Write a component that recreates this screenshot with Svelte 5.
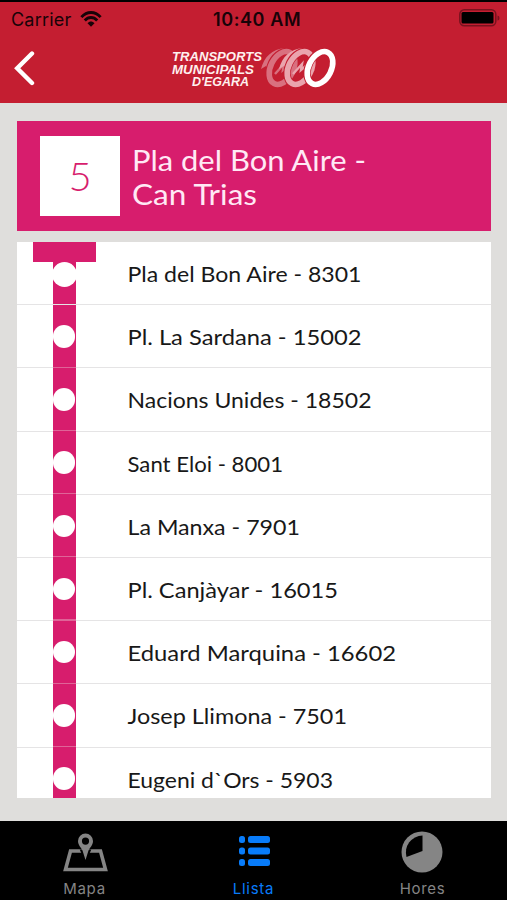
<script>
	const line = { number: 5, name: ['Pla del Bon Aire -', 'Can Trias'] };

	const stops = [
		{ name: 'Pla del Bon Aire', code: 8301, width: 234 },
		{ name: 'Pl. La Sardana', code: 15002, width: 234 },
		{ name: 'Nacions Unides', code: 18502, width: 244 },
		{ name: 'Sant Eloi', code: 8001, width: 155.5 },
		{ name: 'La Manxa', code: 7901, width: 172.5 },
		{ name: 'Pl. Canjàyar', code: 16015, width: 210.5 },
		{ name: 'Eduard Marquina', code: 16602, width: 268.5 },
		{ name: 'Josep Llimona', code: 7501, width: 219.5 },
		{ name: 'Eugeni d`Ors', code: 5903, width: 205.5 }
	];

	const rings = [
		{ x: 112, color: '#d9707f' },
		{ x: 130, color: '#eaa4ad' },
		{ x: 150, color: '#fff' }
	];
</script>

<div class="screen">
	<header>
		<div class="status">
			<span class="carrier">Carrier</span>
			<svg class="wifi" width="22" height="17" viewBox="0 0 22 17">
				<g fill="none" stroke="#180308" stroke-width="2.9">
					<path d="M1.4 6.1C7-.1 15-.1 20.6 6.1" />
					<path d="M4.8 9.4C8.5 5.5 13.5 5.5 17.2 9.4" />
				</g>
				<path d="M7.5 12.2C9.5 10 12.5 10 14.5 12.2L11 15.8Z" fill="#180308" />
			</svg>
			<span class="time">10:40 AM</span>
			<svg class="battery" width="42" height="18" viewBox="0 0 42 18">
				<rect x=".8" y=".8" width="36" height="16" rx="4.5" fill="none" stroke="#79121e" stroke-width="1.5" />
				<rect x="2.5" y="3" width="32" height="11.6" rx="1.5" />
				<path d="M38.5 6.5q2 0 2 2.5t-2 2.5z" fill="#79121e" />
			</svg>
		</div>
		<div class="nav">
			<svg class="back" width="24" height="36" viewBox="0 0 24 36">
				<path d="M19 3.5L4.2 18.3 19 33" fill="none" stroke="#fff" stroke-width="4.4" stroke-linecap="round" />
			</svg>
			<svg class="logo" width="170" height="44" viewBox="0 0 170 44">
				<g class="brand">
					<text x="2" y="14.7" textLength="90" lengthAdjust="spacingAndGlyphs">TRANSPORTS</text>
					<text x="2" y="27.5" textLength="82" lengthAdjust="spacingAndGlyphs">MUNICIPALS</text>
					<text x="22" y="40.2" textLength="57" lengthAdjust="spacingAndGlyphs">D'EGARA</text>
				</g>
				{#each rings as ring, i}
					<g transform="translate({ring.x} 22)">
						{#if i < 2}
							<path d="M-21 1C-18-11-10-19 3-20L9-16C0-15-7-11-10-3L-15 1l-1-3z" fill={ring.color} />
						{/if}
						<ellipse rx="11.5" ry="17.5" transform="rotate(27)" fill="none" stroke="#c41e31" stroke-width="7.5" />
						<ellipse rx="11.3" ry="17.5" transform="rotate(27)" fill="none" stroke={ring.color} stroke-width="5.6" />
						{#if i < 2}
							<path d="M-7 6L2-4l-1 6 6-5-1 7 7-7v6" fill="none" stroke={ring.color} stroke-width="2.4" />
						{/if}
					</g>
				{/each}
			</svg>
		</div>
	</header>

	<main>
		<section class="line">
			<div class="number">{line.number}</div>
			<svg class="title" width="250" height="80" viewBox="0 0 250 80">
				<text x="-2" y="34.5" textLength="234" lengthAdjust="spacingAndGlyphs">{line.name[0]}</text>
				<text x="-2" y="69" textLength="125" lengthAdjust="spacingAndGlyphs">{line.name[1]}</text>
			</svg>
		</section>

		<ul class="stops">
			{#each stops as stop, i}
				<li>
					<div class="track" class:first={i === 0}><span class="dot"></span></div>
					<svg class="name" width="300" height="40" viewBox="0 0 300 40">
						<text x="-.5" y="28.5" textLength={stop.width} lengthAdjust="spacingAndGlyphs">{stop.name} - {stop.code}</text>
					</svg>
				</li>
			{/each}
		</ul>
	</main>

	<nav class="tabs">
		<div class="tab">
			<svg width="48" height="42" viewBox="0 0 48 42">
				<path d="M9.500 19h30l5 18.500h-40z" fill="none" stroke="#858585" stroke-width="3.600" />
				<path d="M24.500 27L21 19h7z" stroke="#000" stroke-width="3" />
				<path
					d="M24.500 1.500a7.500 7.500 0 0 1 7.500 7.500c0 4-3 6.500-4.500 9.500L24.500 28l-3-9.500c-1.500-3-4.500-5.500-4.500-9.500A7.500 7.500 0 0 1 24.500 1.500Zm0 4a3.600 3.600 0 1 0 0 7.200A3.600 3.600 0 0 0 24.500 5.500Z"
					fill="#858585"
					fill-rule="evenodd"
				/>
			</svg>
			<span>Mapa</span>
		</div>
		<div class="tab active">
			<svg width="48" height="42" viewBox="0 0 48 42" fill="#087cfa">
				{#each [4, 15.5, 27] as y}
					<rect x="9" {y} width="6" height="7" rx="2.5" />
					<rect x="18" {y} width="22" height="7" rx="2.5" />
				{/each}
			</svg>
			<span>Llista</span>
		</div>
		<div class="tab">
			<svg width="48" height="42" viewBox="0 0 48 42">
				<circle cx="23" cy="20" r="20.500" fill="#858585" />
				<path d="M23.500 19V3.500A17 17 0 0 0 7.500 25Z" />
			</svg>
			<span>Hores</span>
		</div>
	</nav>
</div>

<style>
	:global(body) {
		background: #000;
	}

	.screen {
		height: 900px;
		box-sizing: border-box;
		padding-top: 2px;
		display: flex;
		flex-direction: column;
		overflow: hidden;
		font-family: Inter, sans-serif;
	}

	header {
		height: 101px;
		background: #c41e31;
		flex: none;
	}

	.status {
		height: 34px;
		display: grid;
		grid-template-columns: 69px 100px 1fr 42px;
		align-items: center;
		padding: 0 6.5px 0 11px;
		color: #180308;
		font-size: 18px;
	}

	.carrier {
		letter-spacing: 0.2px;
	}

	.time {
		padding-left: 33px;
		font-weight: 600;
		letter-spacing: 0.6px;
	}

	.battery {
		margin-top: -2px;
	}

	.nav {
		display: grid;
		grid-template-columns: 157px 1fr;
		padding-left: 13px;
	}

	.back {
		margin-top: 14px;
	}

	.logo {
		margin-top: 10px;
	}

	.brand {
		font: italic bold 12.5px "Liberation Sans", sans-serif;
		fill: #fff0ee;
	}

	main {
		flex: 1;
		background: #dfdedc;
		padding: 18px 16px 0 17px;
	}

	.line {
		height: 110px;
		background: #d71d6d;
		display: flex;
		align-items: center;
		padding-left: 23px;
		gap: 14px;
	}

	.number {
		width: 80px;
		height: 80px;
		background: #fff;
		color: #d71d6d;
		display: grid;
		place-items: center;
		font: 300 40px Lato, sans-serif;
	}

	.title {
		overflow: visible;
		font: 29px Lato, sans-serif;
		fill: #ffe9f5;
	}

	.stops {
		height: 556px;
		margin: 11px 0 0;
		padding: 0;
		overflow: hidden;
		list-style: none;
		background: #fff;
	}

	li {
		height: 63.2px;
		box-sizing: border-box;
		border-bottom: 1px solid #e5e4e5;
		display: flex;
		align-items: center;
	}

	.track {
		width: 23px;
		height: 63.2px;
		flex: none;
		margin: 0 52px 0 35.5px;
		background: linear-gradient(#d71d6d, #d71d6d) top / 100% 62.2px no-repeat, #df6498;
		display: flex;
		align-items: center;
		justify-content: center;
	}

	.track.first {
		width: 63px;
		margin: 0 32px 0 15.5px;
		background:
			linear-gradient(#d71d6d, #d71d6d) top / 63px 20px no-repeat,
			linear-gradient(#d71d6d, #d71d6d) top / 23px 62.2px no-repeat;
	}

	.dot {
		width: 22.5px;
		height: 22.5px;
		border-radius: 50%;
		background: #fff;
	}

	.first .dot {
		width: 25px;
		height: 25px;
		margin-top: 2px;
	}

	.name {
		overflow: visible;
		font: 22px Lato, sans-serif;
		fill: #181818;
	}

	.tabs {
		height: 79px;
		flex: none;
		background: #000;
		display: grid;
		grid-template-columns: repeat(3, 1fr);
	}

	.tab {
		display: flex;
		flex-direction: column;
		align-items: center;
		padding-top: 11px;
		color: #858585;
		font-size: 15px;
		letter-spacing: 0.7px;
		line-height: 18px;
	}

	.tab svg {
		overflow: visible;
	}

	.tab span {
		margin-top: 6px;
	}

	.tab.active {
		color: #087cfa;
	}
</style>
